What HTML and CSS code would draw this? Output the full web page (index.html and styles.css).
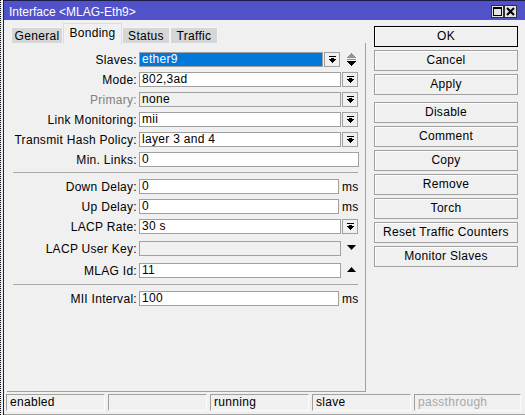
FILE: index.html
```html
<!DOCTYPE html>
<html>
<head>
<meta charset="utf-8">
<link rel="stylesheet" href="styles.css">
</head>
<body>
<div class="screen">
  <div class="strip"></div>
  <div class="window">
    <div class="titlebar">
      <span class="title">Interface &lt;MLAG-Eth9&gt;</span>
      <div class="tbtns">
        <span class="tbtn"><svg width="9" height="9" viewBox="0 0 9 9"><rect x="0.5" y="1" width="8" height="7.5" fill="none" stroke="#000" stroke-width="1"/><rect x="0" y="0" width="9" height="2" fill="#000"/></svg></span>
        <span class="tbtn"><svg width="9" height="9" viewBox="0 0 9 9"><path d="M1 1 L8 8 M8 1 L1 8" stroke="#000" stroke-width="2"/></svg></span>
      </div>
    </div>
    <div class="content">
      <div class="main">
        <div class="tabs">
          <div class="tab t-general">General</div>
          <div class="tab active t-bonding">Bonding</div>
          <div class="tab t-status">Status</div>
          <div class="tab t-traffic">Traffic</div>
        </div>
        <div class="panel">
          <div class="row">
            <span class="label">Slaves:</span>
            <span class="field selected w-slaves">ether9</span>
            <span class="dd"><svg width="7" height="7" viewBox="0 0 7 7"><rect x="0" y="0" width="7" height="1"/><rect x="2" y="2" width="3" height="1"/><rect x="0" y="3" width="7" height="1"/><rect x="1" y="4" width="5" height="1"/><rect x="2" y="5" width="3" height="1"/><rect x="3" y="6" width="1" height="1"/></svg></span>
            <span class="spin"><svg width="9" height="13" viewBox="0 0 9 13"><g fill="#8a968a"><rect x="4" y="0" width="1" height="1"/><rect x="3" y="1" width="3" height="1"/><rect x="2" y="2" width="5" height="1"/><rect x="1" y="3" width="7" height="1"/><rect x="0" y="4" width="9" height="1"/><rect x="0" y="6" width="9" height="1"/></g><g fill="#000"><rect x="0" y="8" width="9" height="1"/><rect x="1" y="9" width="7" height="1"/><rect x="2" y="10" width="5" height="1"/><rect x="3" y="11" width="3" height="1"/><rect x="4" y="12" width="1" height="1"/></g></svg></span>
          </div>
          <div class="row">
            <span class="label">Mode:</span>
            <span class="field w-dd">802,3ad</span>
            <span class="dd"><svg width="7" height="7" viewBox="0 0 7 7"><rect x="0" y="0" width="7" height="1"/><rect x="2" y="2" width="3" height="1"/><rect x="0" y="3" width="7" height="1"/><rect x="1" y="4" width="5" height="1"/><rect x="2" y="5" width="3" height="1"/><rect x="3" y="6" width="1" height="1"/></svg></span>
          </div>
          <div class="row">
            <span class="label disabled">Primary:</span>
            <span class="field off w-dd">none</span>
            <span class="dd"><svg width="7" height="7" viewBox="0 0 7 7"><rect x="0" y="0" width="7" height="1"/><rect x="2" y="2" width="3" height="1"/><rect x="0" y="3" width="7" height="1"/><rect x="1" y="4" width="5" height="1"/><rect x="2" y="5" width="3" height="1"/><rect x="3" y="6" width="1" height="1"/></svg></span>
          </div>
          <div class="row">
            <span class="label">Link Monitoring:</span>
            <span class="field w-dd">mii</span>
            <span class="dd"><svg width="7" height="7" viewBox="0 0 7 7"><rect x="0" y="0" width="7" height="1"/><rect x="2" y="2" width="3" height="1"/><rect x="0" y="3" width="7" height="1"/><rect x="1" y="4" width="5" height="1"/><rect x="2" y="5" width="3" height="1"/><rect x="3" y="6" width="1" height="1"/></svg></span>
          </div>
          <div class="row">
            <span class="label">Transmit Hash Policy:</span>
            <span class="field w-dd">layer 3 and 4</span>
            <span class="dd"><svg width="7" height="7" viewBox="0 0 7 7"><rect x="0" y="0" width="7" height="1"/><rect x="2" y="2" width="3" height="1"/><rect x="0" y="3" width="7" height="1"/><rect x="1" y="4" width="5" height="1"/><rect x="2" y="5" width="3" height="1"/><rect x="3" y="6" width="1" height="1"/></svg></span>
          </div>
          <div class="row">
            <span class="label">Min. Links:</span>
            <span class="field w-full">0</span>
          </div>
          <div class="sep"></div>
          <div class="row">
            <span class="label">Down Delay:</span>
            <span class="field w-ms">0</span>
            <span class="unit">ms</span>
          </div>
          <div class="row">
            <span class="label">Up Delay:</span>
            <span class="field w-ms">0</span>
            <span class="unit">ms</span>
          </div>
          <div class="row gap7">
            <span class="label">LACP Rate:</span>
            <span class="field w-dd">30 s</span>
            <span class="dd"><svg width="7" height="7" viewBox="0 0 7 7"><rect x="0" y="0" width="7" height="1"/><rect x="2" y="2" width="3" height="1"/><rect x="0" y="3" width="7" height="1"/><rect x="1" y="4" width="5" height="1"/><rect x="2" y="5" width="3" height="1"/><rect x="3" y="6" width="1" height="1"/></svg></span>
          </div>
          <div class="row gap7">
            <span class="label">LACP User Key:</span>
            <span class="field off w-dd"></span>
            <span class="arrow"><svg width="9" height="5" viewBox="0 0 9 5"><polygon points="0,0 9,0 4.5,5" fill="#000"/></svg></span>
          </div>
          <div class="row gap6">
            <span class="label">MLAG Id:</span>
            <span class="field w-dd">11</span>
            <span class="arrow"><svg width="9" height="5" viewBox="0 0 9 5"><polygon points="4.5,0 9,5 0,5" fill="#000"/></svg></span>
          </div>
          <div class="sep"></div>
          <div class="row">
            <span class="label">MII Interval:</span>
            <span class="field w-ms">100</span>
            <span class="unit">ms</span>
          </div>
        </div>
      </div>
      <div class="side">
        <div class="btn ok">OK</div>
        <div class="btn">Cancel</div>
        <div class="btn group-end">Apply</div>
        <div class="btn">Disable</div>
        <div class="btn">Comment</div>
        <div class="btn">Copy</div>
        <div class="btn">Remove</div>
        <div class="btn">Torch</div>
        <div class="btn">Reset Traffic Counters</div>
        <div class="btn">Monitor Slaves</div>
      </div>
    </div>
    <div class="status">
      <span class="sfield">enabled</span>
      <span class="sfield"></span>
      <span class="sfield">running</span>
      <span class="sfield">slave</span>
      <span class="sfield last dim">passthrough</span>
    </div>
  </div>
</div>
</body>
</html>
```

FILE: styles.css
```css
html, body {
  margin: 0;
  padding: 0;
}
body {
  width: 525px;
  height: 415px;
  overflow: hidden;
  background: #f0f0f0;
  font-family: "Liberation Sans", Arial, sans-serif;
  font-size: 12px;
  letter-spacing: 0.3px;
  color: #000;
}
.screen {
  display: flex;
  height: 415px;
}
.strip {
  width: 2px;
  border-left: 1px dotted #000;
  border-right: 1px solid #222;
  background: #e8ecf4;
}
.window {
  flex: 1;
  display: flex;
  flex-direction: column;
  background: #f0f0f0;
}
.titlebar {
  height: 19px;
  border-top: 1px solid #1c1c48;
  background: #5151c9;
  display: flex;
  align-items: flex-start;
  padding: 0 8px 0 5px;
  color: #fff;
  letter-spacing: 0;
}
.title {
  flex: 1;
  line-height: 14px;
  padding-top: 4px;
}
.tbtns {
  display: flex;
  gap: 0;
  margin-top: 4px;
}
.tbtn {
  width: 13px;
  height: 13px;
  box-sizing: border-box;
  background: #e4e4e4;
  border: 1px solid #303030;
  display: flex;
  align-items: center;
  justify-content: center;
}
.content {
  display: flex;
  height: 373px;
}
.main {
  margin-left: 3px;
  width: 359px;
  padding-top: 3px;
  display: flex;
  flex-direction: column;
}
.tabs {
  display: flex;
  height: 20px;
  padding-left: 4px;
  align-items: flex-end;
}
.tab {
  height: 16px;
  box-sizing: border-box;
  background: #d6d6d6;
  border: 1px solid #f4f4f4;
  border-bottom: none;
  text-align: center;
  line-height: 16px;
}
.tab.active {
  height: 21px;
  margin-bottom: -1px;
  background: #f0f0f0;
  border-color: #dcdcdc;
  line-height: 19px;
  position: relative;
}
.t-general { width: 52px; }
.t-bonding { width: 59px; }
.t-status { width: 48px; }
.t-traffic { width: 48px; }
.panel {
  height: 349px;
  box-sizing: border-box;
  border-right: 1px solid #a0a0a0;
  border-bottom: 1px solid #a0a0a0;
  padding-top: 9px;
}
.row {
  display: flex;
  align-items: center;
  height: 15px;
  margin-bottom: 5px;
}
.row.gap7 { margin-bottom: 7px; }
.row.gap6 { margin-bottom: 6px; }
.label {
  width: 132px;
  box-sizing: border-box;
  padding-right: 2px;
  text-align: right;
  white-space: nowrap;
}
.label.disabled { color: #808080; }
.field {
  height: 15px;
  box-sizing: border-box;
  border: 1px solid #a0a0a0;
  background: #fff;
  padding-left: 2px;
  line-height: 13px;
  white-space: nowrap;
  overflow: hidden;
}
.field.selected {
  background: #0078d7;
  color: #fff;
}
.field.off {
  background: #f0f0f0;
}
.w-slaves { width: 184px; }
.w-dd { width: 202px; }
.w-full { width: 220px; }
.w-ms { width: 200px; }
.dd {
  width: 16px;
  height: 15px;
  box-sizing: border-box;
  border: 1px solid #a0a0a0;
  background: #f0f0f0;
  margin-left: 1px;
  display: flex;
  align-items: center;
  justify-content: center;
}
.dd svg { display: block; }
.spin {
  margin-left: 7px;
  display: flex;
}
.arrow {
  margin-left: 6px;
  display: flex;
  margin-top: -2px;
}
.unit {
  margin-left: 3px;
}
.sep {
  margin: 0 0 6px 6px;
  width: 345px;
  height: 1px;
  background: #a8a8a8;
}
.side {
  margin-left: 8px;
  width: 144px;
  padding-top: 6px;
}
.btn {
  height: 21px;
  box-sizing: border-box;
  border: 1px solid #a0a0a0;
  box-shadow: inset 1px 1px #fcfcfc;
  background: #f0f0f0;
  text-align: center;
  line-height: 18px;
  margin-bottom: 3px;
  white-space: nowrap;
}
.btn.ok { border-color: #000; }
.btn.group-end { margin-bottom: 7px; }
.status {
  height: 22px;
  box-sizing: border-box;
  border-bottom: 1px solid #a0a0a0;
  display: flex;
  gap: 3px;
  padding-left: 2px;
  padding-top: 1px;
}
.sfield {
  width: 99px;
  height: 17px;
  box-sizing: border-box;
  border-top: 1px solid #a0a0a0;
  border-left: 1px solid #a0a0a0;
  border-right: 1px solid #fcfcfc;
  border-bottom: 1px solid #fcfcfc;
  padding-left: 3px;
  line-height: 15px;
}
.sfield.last { width: 107px; }
.sfield.dim { color: #a8a8a8; }
```
